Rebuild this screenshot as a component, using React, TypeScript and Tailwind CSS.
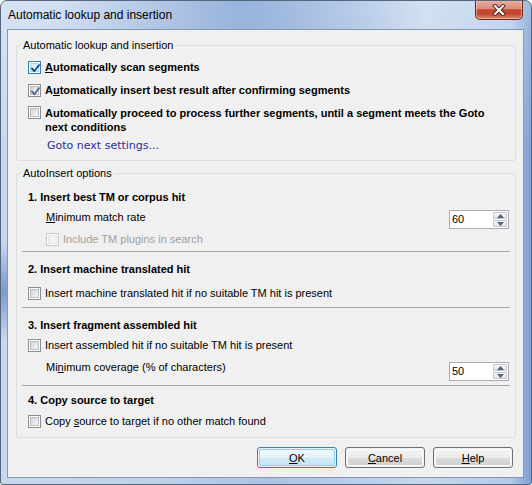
import React from "react";

type CheckProps = { checked?: boolean; hot?: boolean; disabled?: boolean };

function Check({ checked, hot, disabled }: CheckProps) {
  const outer = disabled
    ? "border-[#c8c8c8]"
    : hot
    ? "border-[#3c7fb1]"
    : "border-[#8e8f8f]";
  const inner = disabled
    ? "border-[#e6e6e6] bg-[#f4f4f4]"
    : hot
    ? "border-[#a9d7f3] bg-[linear-gradient(135deg,#cfeafb_0%,#f3fafe_100%)]"
    : "border-[#b7bcc2] bg-[linear-gradient(135deg,#d3d6da_0%,#f7f7f7_100%)]";
  return (
    <span className={`relative block w-[13px] h-[13px] shrink-0 border ${outer} bg-white`}>
      <span className={`absolute inset-[1px] border ${inner}`} />
      {checked && (
        <svg
          className="absolute left-[1px] top-[1px]"
          width="11"
          height="11"
          viewBox="0 0 11 11"
        >
          <path
            d="M2 5.6 L4.3 8.2 L9 2.2"
            fill="none"
            stroke={hot ? "#1f3a7a" : "#4a5f8e"}
            strokeWidth="1.8"
            strokeLinecap="square"
          />
        </svg>
      )}
    </span>
  );
}

function Spin({ value }: { value: string }) {
  return (
    <div className="flex w-[60px] h-[19px] border border-[#abadb3] bg-white">
      <div className="flex-1 pl-[2px] text-[11px] leading-[17px] text-black">{value}</div>
      <div className="flex flex-col w-[15px] py-[1px] pr-[1px] gap-px">
        <div className="flex-1 flex items-center justify-center border border-[#c3c6cc] rounded-[1px] bg-[linear-gradient(180deg,#f7f7f7_0%,#e6e6e6_100%)]">
          <svg width="7" height="4" viewBox="0 0 7 4">
            <path d="M0 4 L3.5 0 L7 4 Z" fill="#4c6080" />
          </svg>
        </div>
        <div className="flex-1 flex items-center justify-center border border-[#c3c6cc] rounded-[1px] bg-[linear-gradient(180deg,#f7f7f7_0%,#e6e6e6_100%)]">
          <svg width="7" height="4" viewBox="0 0 7 4">
            <path d="M0 0 L7 0 L3.5 4 Z" fill="#4c6080" />
          </svg>
        </div>
      </div>
    </div>
  );
}

function Btn({ children, def }: { children: React.ReactNode; def?: boolean }) {
  return (
    <div
      className={`w-[80px] h-[21px] rounded-[3px] border ${
        def ? "border-[#3c7fb1]" : "border-[#707070]"
      } p-px`}
    >
      <div
        className={`w-full h-full rounded-[2px] border ${
          def
            ? "border-[#8ed0f5] bg-[linear-gradient(180deg,#f1f8fd_0%,#e5f3fb_50%,#d3ebf8_50%,#c8e4f5_100%)]"
            : "border-[#fbfbfb] bg-[linear-gradient(180deg,#f3f3f3_0%,#ebebeb_50%,#dddddd_50%,#d0d0d0_100%)]"
        } flex items-center justify-center text-[11px] leading-[14px] text-black`}
      >
        {children}
      </div>
    </div>
  );
}

function Label({ children, bold, disabled }: { children: React.ReactNode; bold?: boolean; disabled?: boolean }) {
  return (
    <span
      className={`text-[11px] leading-[14px] whitespace-nowrap ${bold ? "font-bold" : ""} ${
        disabled ? "text-[#a0a0a0]" : "text-black"
      }`}
    >
      {children}
    </span>
  );
}

function U({ children }: { children: React.ReactNode }) {
  return <span className="underline underline-offset-[1px]">{children}</span>;
}

function Sep() {
  return <div className="h-px bg-[#a7a7a7]" />;
}

export default function App() {
  return (
    <div className="w-[532px] h-[485px] bg-white font-['Liberation_Sans',Arial,sans-serif]">
      <div className="w-[532px] h-[485px] rounded-t-[7px] rounded-b-[3px] border border-[#56667c] flex flex-col overflow-hidden bg-[radial-gradient(ellipse_at_45%_0%,rgba(118,152,206,0.55)_0%,rgba(118,152,206,0)_45%),radial-gradient(ellipse_at_0%_60%,rgba(90,125,190,0.7)_0%,rgba(90,125,190,0)_12%),linear-gradient(180deg,rgba(255,255,255,0.25)_0%,rgba(255,255,255,0)_30%),linear-gradient(90deg,#c8d9ef_0%,#bdd1eb_30%,#aac3e6_50%,#c4d7ee_80%,#b3cbea_96%,#7d9fd3_100%)]">
        <div className="h-[28px] flex items-start justify-between shrink-0">
          <span className="pl-[7px] pt-[7px] text-[12px] leading-[14px] text-black whitespace-nowrap">
            Automatic lookup and insertion
          </span>
          <div className="-mt-px mr-[8px] w-[48px] h-[20px] rounded-b-[5px] border border-t-0 border-[#6a2a1f] flex items-center justify-center bg-[linear-gradient(180deg,#eab2a4_0%,#dc8c78_45%,#c5452d_52%,#c44a32_75%,#de8a6e_100%)] shadow-[inset_0_0_0_1px_rgba(255,230,220,0.45)]">
            <svg width="14" height="12" viewBox="0 0 14 12">
              <path d="M3 2 L11 10 M11 2 L3 10" stroke="#4a1c14" strokeWidth="4" strokeLinecap="square" />
              <path d="M3 2 L11 10 M11 2 L3 10" stroke="#ffffff" strokeWidth="2.2" strokeLinecap="square" />
            </svg>
          </div>
        </div>

        <div className="ml-[6px] mr-[7px] mb-[6px] flex-1 border border-[#8598b2] bg-[#f0f0f0] flex flex-col">
          {/* Group 1 */}
          <fieldset className="ml-[8px] mr-[7px] mt-[8px] border border-[#d5dfe5] rounded-[3px] pb-[7px]">
            <legend className="ml-[4px] px-[2px] text-[11px] leading-[14px] text-black">
              Automatic lookup and insertion
            </legend>
            <div className="px-[11px] flex flex-col">
              <div className="mt-[8px] flex items-center gap-[4px] h-[14px]">
                <Check checked hot />
                <Label bold>
                  <U>A</U>utomatically scan segments
                </Label>
              </div>
              <div className="mt-[9px] flex items-center gap-[4px] h-[14px]">
                <Check checked />
                <Label bold>
                  A<U>u</U>tomatically insert best result after confirming segments
                </Label>
              </div>
              <div className="mt-[9px] flex items-start gap-[4px]">
                <Check />
                <div className="flex flex-col">
                  <Label bold>
                    Automatically proceed to process further segments, until a segment meets the Goto
                  </Label>
                  <Label bold>next conditions</Label>
                </div>
              </div>
              <div className="mt-[5px] ml-[19px] font-['DejaVu_Sans',Verdana,sans-serif] text-[11px] leading-[14px] text-[#2d2d9e]">
                Goto next settings...
              </div>
            </div>
          </fieldset>

          {/* Group 2 */}
          <fieldset className="ml-[8px] mr-[7px] mt-[5px] border border-[#d5dfe5] rounded-[3px] pb-[9px]">
            <legend className="ml-[4px] px-[2px] text-[11px] leading-[14px] text-black">
              AutoInsert options
            </legend>
            <div className="px-[5px] flex flex-col">
              <div className="mt-[10px] pl-[6px] h-[14px] flex items-center">
                <Label bold>1. Insert best TM or corpus hit</Label>
              </div>
              <div className="mt-[6px] pl-[24px] pr-[1px] flex items-start justify-between">
                <Label>
                  <U>M</U>inimum match rate
                </Label>
                <Spin value="60" />
              </div>
              <div className="mt-[3px] pl-[24px] h-[14px] flex items-center gap-[4px]">
                <Check disabled />
                <Label disabled>Include TM plugins in search</Label>
              </div>
              <div className="mt-[5px]">
                <Sep />
              </div>
              <div className="mt-[10px] pl-[6px] h-[14px] flex items-center">
                <Label bold>2. Insert machine translated hit</Label>
              </div>
              <div className="mt-[10px] pl-[6px] h-[14px] flex items-center gap-[4px]">
                <Check />
                <Label>Insert machine translated hit if no suitable TM hit is present</Label>
              </div>
              <div className="mt-[7px]">
                <Sep />
              </div>
              <div className="mt-[10px] pl-[6px] h-[14px] flex items-center">
                <Label bold>3. Insert fragment assembled hit</Label>
              </div>
              <div className="mt-[6px] pl-[6px] h-[14px] flex items-center gap-[4px]">
                <Check />
                <Label>Insert assembled hit if no suitable TM hit is present</Label>
              </div>
              <div className="mt-[8px] pl-[24px] pr-[1px] flex items-start justify-between">
                <Label>
                  Mi<U>n</U>imum coverage (% of characters)
                </Label>
                <div className="mt-[2px]">
                  <Spin value="50" />
                </div>
              </div>
              <div className="mt-[4px]">
                <Sep />
              </div>
              <div className="mt-[7px] pl-[6px] h-[14px] flex items-center">
                <Label bold>4. Copy source to target</Label>
              </div>
              <div className="mt-[7px] pl-[6px] h-[14px] flex items-center gap-[4px]">
                <Check />
                <Label>
                  Copy <U>s</U>ource to target if no other match found
                </Label>
              </div>
            </div>
          </fieldset>

          <div className="mt-[9px] mr-[10px] flex justify-end gap-[8px]">
            <Btn def>
              <U>O</U>K
            </Btn>
            <Btn>
              <U>C</U>ancel
            </Btn>
            <Btn>
              <U>H</U>elp
            </Btn>
          </div>
        </div>
      </div>
    </div>
  );
}
